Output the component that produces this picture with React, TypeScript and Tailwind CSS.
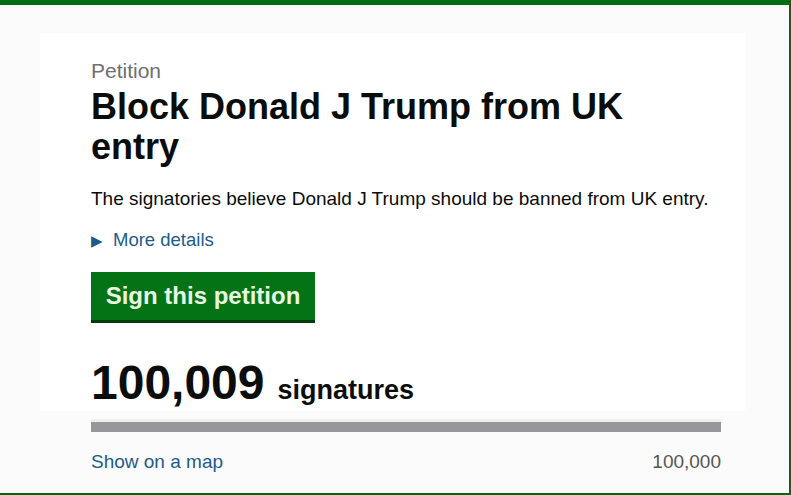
export default function App() {
  const count = 100009;
  const target = 100000;
  const pct = Math.min(100, (count / target) * 100);

  return (
    <div
      className="h-[495px] w-[791px] overflow-hidden border-t-[5px] border-r-2 border-b-2 border-[#006b0f] bg-[#fcfbfc]"
      style={{ fontFamily: '"Liberation Sans", Arial, sans-serif' }}
    >
      <div className="ml-[40px] mt-[28px] w-[705px] bg-white pl-[51px] pr-[24px] pt-[25px] pb-0">
        <div className="text-[21px] leading-[26px] text-[#6f6f6f]">Petition</div>
        <h1 className="mt-[3px] text-[36px] font-bold leading-[40px] text-[#0b0c0c]">
          Block Donald J Trump from UK entry
        </h1>
        <p className="mt-[20px] text-[19px] leading-[24px] text-[#0b0c0c]">
          The signatories believe Donald J Trump should be banned from UK entry.
        </p>
        <div className="mt-[17px] flex items-center gap-[10px] text-[18.5px] leading-[24px] text-[#1d5b8c]">
          <span className="text-[15px] leading-none">&#9654;</span>
          <span>More details</span>
        </div>
        <button className="mt-[20px] h-[51px] w-[224px] border-b-[3px] border-[#003d0a] bg-[#047316] text-[24px] font-bold text-[#e9f6e2]">
          Sign this petition
        </button>
        <div className="mt-[36px] flex items-baseline gap-[13px] pb-[4px] text-[#0b0c0c]">
          <span className="text-[48px] font-bold leading-[48px]">100,009</span>
          <span className="text-[27px] font-bold leading-[30px]">signatures</span>
        </div>
      </div>
      <div className="ml-[91px] w-[630px]">
        <div className="mt-[8px] h-[13px] border-t-[3px] border-[#eeeeee] bg-[#f2f2f2]">
          <div className="h-full bg-[#97979b]" style={{ width: `${pct}%` }} />
        </div>
        <div className="mt-[18px] flex items-center justify-between text-[19px] leading-[24px]">
          <span className="text-[#1d5b8c]">Show on a map</span>
          <span className="text-[#555555]">100,000</span>
        </div>
      </div>
    </div>
  );
}
